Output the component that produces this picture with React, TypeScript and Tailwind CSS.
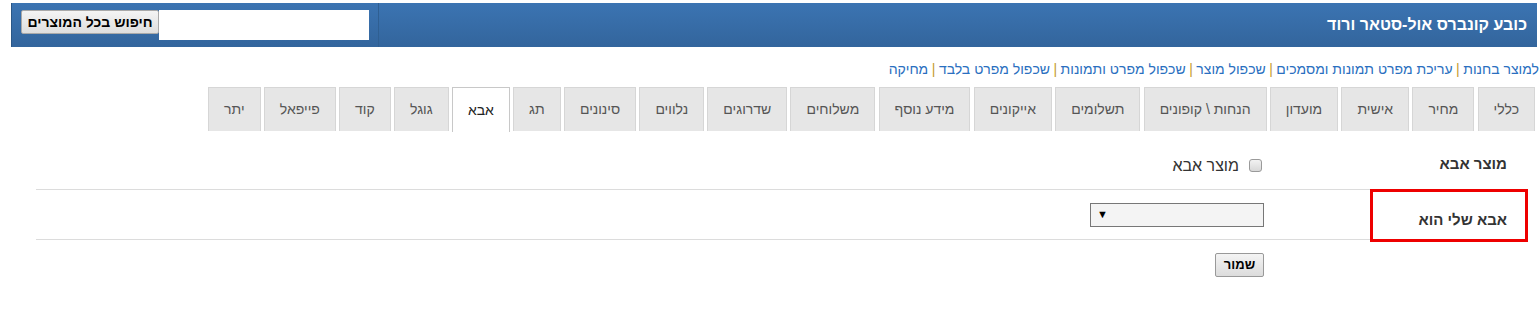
import React from "react";

const LINKS = [
  "למוצר בחנות",
  "עריכת מפרט תמונות ומסמכים",
  "שכפול מוצר",
  "שכפול מפרט ותמונות",
  "שכפול מפרט בלבד",
  "מחיקה",
];

const TABS = [
  "כללי",
  "מחיר",
  "אישית",
  "מועדון",
  "הנחות \\ קופונים",
  "תשלומים",
  "אייקונים",
  "מידע נוסף",
  "משלוחים",
  "שדרוגים",
  "נלווים",
  "סינונים",
  "תג",
  "אבא",
  "גוגל",
  "קוד",
  "פייפאל",
  "יתר",
];

const ACTIVE = "אבא";

export default function App() {
  return (
    <div
      dir="rtl"
      className="relative h-[317px] w-[1540px] overflow-hidden bg-white font-['Liberation_Sans',Arial,sans-serif] text-[#333]"
    >
      {/* header bar */}
      <div className="ml-[11px] mr-[3px] mt-[3px] flex h-[44px] border-l border-[#2b5787] bg-gradient-to-b from-[#3b74b2] to-[#33659c]">
        <div className="flex flex-1 items-center border-l border-[#2f5f92] pr-[10px] pb-[1px]">
          <h1 className="text-[16px] font-bold text-white">כובע קונברס אול-סטאר ורוד</h1>
        </div>
        <div className="flex w-[366px] items-start pr-[9px] pt-[7px]">
          <input
            type="text"
            className="h-[30px] w-[210px] border-0 bg-white outline-none"
          />
          <button className="h-[24px] w-[138px] rounded-[2px] border border-[#a9a9a9] bg-gradient-to-b from-[#f4f4f4] to-[#dedede] text-[14px] font-bold text-black">
            חיפוש בכל המוצרים
          </button>
        </div>
      </div>

      {/* action links */}
      <div className="mt-[13px] flex h-[17px] items-center pr-[1px] text-[14px] leading-none">
        {LINKS.map((l, i) => (
          <React.Fragment key={l}>
            {i > 0 && <span className="mx-[3.5px] text-[#c49a2c]">|</span>}
            <a href="#" className="text-[#2a6fc0]">
              {l}
            </a>
          </React.Fragment>
        ))}
      </div>

      {/* tabs */}
      <div className="mt-[10px] flex gap-[3.25px] pr-[5px]">
        {TABS.map((t) => (
          <div
            key={t}
            className={
              t === ACTIVE
                ? "flex h-[45px] items-center border border-b-0 border-[#c8c8c8] bg-white px-[15px] text-[14px] text-[#222]"
                : "flex h-[44px] items-center border border-b-0 border-[#d6d6d6] bg-[#e6e6e6] px-[15px] text-[14px] text-[#555]"
            }
          >
            {t}
          </div>
        ))}
      </div>

      {/* form */}
      <div className="ml-[36px] mr-[27px] mt-[8px]">
        <div className="flex h-[50px] border-b border-[#dcdcdc]">
          <div className="flex w-[243px] items-center pr-[6px] pb-[1px] text-[15px] font-bold text-[#333]">
            מוצר אבא
          </div>
          <div className="flex items-center gap-[10px] pr-[8px] pt-[2px]">
            <span className="h-[13px] w-[13px] rounded-[3px] border border-[#9a9a9a] bg-gradient-to-b from-[#f2f2f2] to-[#d8d8d8]" />
            <span className="text-[16px] text-[#333]">מוצר אבא</span>
          </div>
        </div>
        <div className="flex h-[50px] border-b border-[#dcdcdc]">
          <div className="flex w-[243px] items-end pr-[6px] pb-[8px] text-[15px] font-bold text-[#333]">
            אבא שלי הוא
          </div>
          <div className="flex items-center pr-[6px]">
            <div className="flex h-[24px] w-[174px] items-center justify-end border border-[#777] bg-[#f4f4f4] pl-[6px] text-[11px] text-black">
              ▼
            </div>
          </div>
        </div>
        <div className="flex pt-[12px]">
          <div className="w-[243px]" />
          <div className="pr-[6px]">
            <button className="h-[24px] w-[49px] rounded-[2px] border border-[#999] bg-gradient-to-b from-[#f4f4f4] to-[#dcdcdc] text-[13px] font-bold text-black">
              שמור
            </button>
          </div>
        </div>
      </div>

      {/* highlight annotation */}
      <div className="absolute left-[1370px] top-[189px] h-[53px] w-[158px] border-[3px] border-[#ee0000]" />
    </div>
  );
}
